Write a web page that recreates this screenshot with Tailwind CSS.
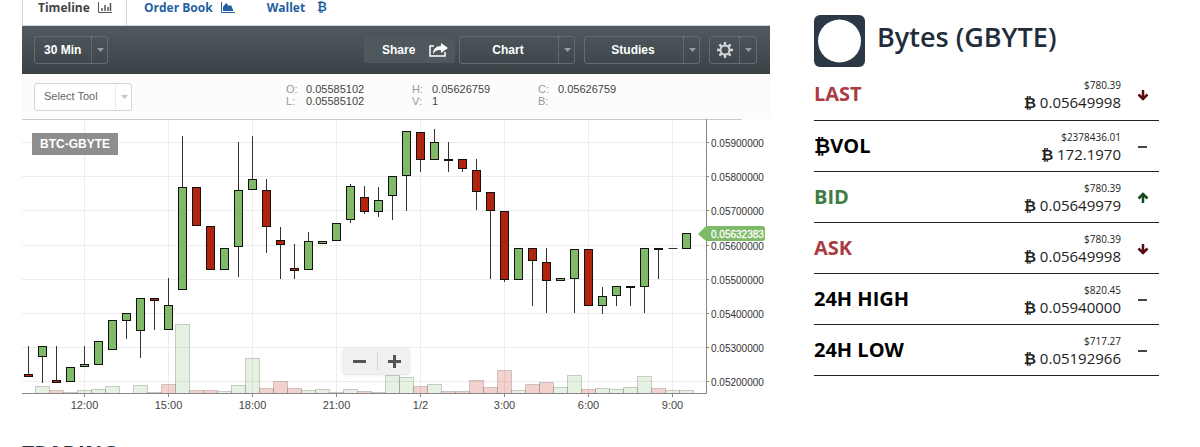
<!DOCTYPE html>
<html lang="en">
<head>
  <meta charset="UTF-8" />
  <meta name="viewport" content="width=device-width, initial-scale=1.0" />
  <title>BTC-GBYTE</title>
  <script src="https://cdn.jsdelivr.net/npm/@tailwindcss/browser@4"></script>
</head>
<body class="bg-white h-screen overflow-hidden font-['Open_Sans',sans-serif]">
  <div class="flex items-start gap-11 pl-[22px] pr-[41px]">
    <main class="flex-1 min-w-0">
      <nav class="flex h-[26px] border-b border-gray-300 text-xs font-bold text-[#23609f]">
        <a href="#" class="flex items-start gap-2 w-[105px] pl-[15px] border-x border-gray-300 text-[#444] leading-[15px]">
          Timeline
          <svg class="w-[14px] h-[11px] mt-[2px]" viewBox="0 0 14 11" fill="none" stroke="#555"><path d="M.5 0v10.5H14" /><path stroke-width="1.5" d="M4 9V6M7 9V3M10 9V5M12.5 9V1" /></svg>
        </a>
        <a href="#" class="flex items-start gap-2 pl-[17px] leading-[15px]">
          Order Book
          <svg class="w-[14px] h-[11px] mt-[2px]" viewBox="0 0 14 11"><path d="M.5 0v10.5H14" fill="none" stroke="#23609f" /><path d="M2 9V5l3-4 3 3 2-1 2.500 6z" fill="#23609f" /></svg>
        </a>
        <a href="#" class="flex items-start gap-3 pl-8 leading-[15px]">Wallet <span class="font-['DejaVu_Sans',sans-serif] text-xs leading-[15px]">₿</span></a>
      </nav>

      <div class="flex items-center h-12 pl-3 pr-[13px] bg-linear-to-b from-[#4f5a60] to-[#3b4246] font-['Liberation_Sans',sans-serif] text-xs font-bold text-white">
        <div class="relative w-[74px]">
          <select aria-label="Interval" class="appearance-none block w-full h-7 pl-[9px] pr-[18px] rounded-[3px] border border-[#646c71]">
            <option>30 Min</option>
          </select>
          <span class="absolute right-0 inset-y-0 w-[17px] flex items-center justify-center border-l border-dotted border-[#7b8287] pointer-events-none"><svg class="w-[7px] h-[4px]" viewBox="0 0 7 4"><path d="M0 0h7L3.500 4z" fill="#9ba0a3" /></svg></span>
        </div>
        <button class="ml-auto mr-1 flex items-center gap-[14px] w-[91px] h-[26px] pl-[18px] rounded-[3px] bg-[#4e585d]">
          Share
          <svg class="w-[19px] h-[14px]" viewBox="0 0 19 14"><path d="M5 3H1v10h15V9" fill="none" stroke="#fff" stroke-width="1.5" /><path d="M12 0l7 5-7 5V7C8 6.500 6 8 4 11 4 6 7 3 12 3z" fill="#fff" /></svg>
        </button>
        <div class="relative w-[116px] mr-[9px]">
          <select aria-label="Chart" class="appearance-none block w-full h-7 pr-[18px] rounded-[3px] border border-[#646c71] text-center">
            <option>Chart</option>
          </select>
          <span class="absolute right-0 inset-y-0 w-[17px] flex items-center justify-center border-l border-dotted border-[#7b8287] pointer-events-none"><svg class="w-[7px] h-[4px]" viewBox="0 0 7 4"><path d="M0 0h7L3.500 4z" fill="#9ba0a3" /></svg></span>
        </div>
        <div class="relative w-[116px] mr-[9px]">
          <select aria-label="Studies" class="appearance-none block w-full h-7 pr-[18px] rounded-[3px] border border-[#646c71] text-center">
            <option>Studies</option>
          </select>
          <span class="absolute right-0 inset-y-0 w-[17px] flex items-center justify-center border-l border-dotted border-[#7b8287] pointer-events-none"><svg class="w-[7px] h-[4px]" viewBox="0 0 7 4"><path d="M0 0h7L3.500 4z" fill="#9ba0a3" /></svg></span>
        </div>
        <button aria-label="Settings" class="flex w-12 h-7 rounded-[3px] border border-[#646c71]">
          <span class="flex-1 h-full flex items-center justify-center"><svg class="w-4 h-4" viewBox="0 0 16 16" fill="none" stroke="#d3d5d6"><circle cx="8" cy="8" r="4.5" stroke-width="2" /><path stroke-width="2.4" d="M8 0v3M8 13v3M0 8h3M13 8h3M2.400 2.400l2 2M11.600 11.600l2 2M2.400 13.600l2-2M11.600 4.400l2-2" /></svg></span>
          <span class="w-[17px] h-full flex items-center justify-center border-l border-dotted border-[#7b8287]"><svg class="w-[7px] h-[4px]" viewBox="0 0 7 4"><path d="M0 0h7L3.500 4z" fill="#9ba0a3" /></svg></span>
        </button>
      </div>

      <div class="flex items-center h-[45px] pl-3 bg-[#fcfcfc] font-['Liberation_Sans',sans-serif] text-[11px] text-[#444]">
        <div class="relative w-[98px]">
          <select aria-label="Tool" class="appearance-none block w-full h-7 pl-[9px] rounded-[3px] border border-gray-300 bg-white text-[#666]">
            <option>Select Tool</option>
          </select>
          <span class="absolute right-0 inset-y-0 w-[17px] flex items-center justify-center border-l border-dotted border-gray-300 pointer-events-none"><svg class="w-[7px] h-[4px]" viewBox="0 0 7 4"><path d="M0 0h7L3.500 4z" fill="#c4c4c4" /></svg></span>
        </div>
        <dl class="grid grid-cols-[20px_106px_20px_106px_20px_106px] ml-[154px] pb-1 leading-3">
          <dt class="text-[#999]">O:</dt><dd>0.05585102</dd>
          <dt class="text-[#999]">H:</dt><dd>0.05626759</dd>
          <dt class="text-[#999]">C:</dt><dd>0.05626759</dd>
          <dt class="text-[#999]">L:</dt><dd>0.05585102</dd>
          <dt class="text-[#999]">V:</dt><dd>1</dd>
          <dt class="text-[#999]">B:</dt><dd></dd>
        </dl>
      </div>

      <div class="relative font-['Liberation_Sans',sans-serif]">
        <svg id="chart" class="block w-full" viewBox="0 0 748 294"></svg>
        <div class="absolute left-[10px] top-[14px] px-2 bg-[#8e8e8e] text-white text-xs font-bold leading-[22px]">BTC-GBYTE</div>
        <div class="absolute left-[320px] top-[229px] flex items-center h-[26px] rounded-[4px] bg-[#f0f0f0] shadow-sm">
          <button aria-label="Zoom out" class="w-[36px] h-[17px] flex items-center justify-center border-r border-gray-300"><svg class="w-[13px] h-[13px]" viewBox="0 0 13 13"><path d="M0 6.500h13" stroke="#555" stroke-width="3" /></svg></button>
          <button aria-label="Zoom in" class="w-[32px] h-[17px] flex items-center justify-center"><svg class="w-[13px] h-[13px]" viewBox="0 0 13 13"><path d="M0 6.500h13M6.500 0v13" stroke="#555" stroke-width="3" /></svg></button>
        </div>
      </div>

      <h2 class="mt-[25px] text-[21px] leading-[30px] font-bold text-[#222d3a]">TRADING</h2>
    </main>

    <aside class="w-[345px] pt-[15px]">
      <div class="flex h-[54px] gap-3">
        <svg class="w-[51px] h-[52px]" viewBox="0 0 51 52"><rect width="51" height="52" rx="6" fill="#2b3947" /><circle cx="25.5" cy="26" r="21.5" fill="#fff" /></svg>
        <h1 class="text-[27px] leading-[44px] font-semibold text-[#222d3a]">Bytes (GBYTE)</h1>
      </div>
      <table class="w-full border-collapse text-[#222]">
        <tbody id="stats"></tbody>
      </table>
    </aside>
  </div>

  <script>
    // [up/down, high, top, bottom, low, volume]
    const candles = [
      ['r', 227, 255, 258, 258, 0], ['g', 227, 227, 238, 264, 7], ['r', 227, 261, 264, 264, 3], ['g', 248, 248, 263, 263, 1],
      ['g', 227, 245, 248, 248, 3], ['g', 222, 222, 246, 246, 4], ['g', 201, 201, 231, 231, 7], ['g', 194, 194, 202, 220, 0],
      ['g', 179, 179, 212, 239, 8], ['r', 179, 179, 182, 211, 1], ['g', 159, 186, 211, 211, 9, 'r'], ['g', 17, 68, 171, 171, 69],
      ['r', 68, 68, 107, 107, 3], ['r', 107, 107, 151, 151, 3], ['g', 129, 129, 151, 151, 2], ['g', 23, 71, 128, 158, 8],
      ['g', 17, 60, 71, 71, 35], ['r', 60, 71, 108, 134, 5], ['r', 108, 121, 126, 160, 12], ['r', 125, 149, 152, 160, 5],
      ['g', 113, 122, 151, 151, 3], ['g', 122, 122, 125, 125, 4], ['g', 104, 104, 122, 122, 1], ['g', 65, 67, 101, 104, 4],
      ['r', 67, 78, 93, 95, 2], ['g', 68, 81, 93, 98, 1], ['g', 57, 57, 77, 101, 18], ['g', 12, 12, 57, 92, 16],
      ['r', 13, 13, 41, 53, 7], ['g', 10, 23, 41, 41, 9], ['r', 23, 40, 42, 53, 2], ['r', 40, 40, 50, 53, 2],
      ['r', 40, 51, 73, 91, 13], ['r', 73, 73, 92, 160, 6], ['r', 92, 92, 161, 163, 23], ['g', 129, 129, 161, 161, 3],
      ['r', 129, 129, 142, 187, 9], ['r', 129, 143, 162, 194, 11], ['g', 159, 159, 162, 162, 6], ['g', 130, 130, 160, 194, 18],
      ['r', 130, 130, 187, 187, 4], ['g', 168, 177, 187, 195, 5], ['g', 167, 167, 177, 187, 4], ['g', 167, 167, 169, 187, 6],
      ['g', 129, 129, 168, 194, 17], ['r', 129, 129, 131, 160, 5], ['r', 129, 129, 129, 129, 3, 'g'], ['g', 114, 114, 130, 130, 3]
    ];
    const prices = ['0.05900000', '0.05800000', '0.05700000', '0.05600000', '0.05500000', '0.05400000', '0.05300000', '0.05200000'];
    const times = ['12:00', '15:00', '18:00', '21:00', '1/2', '3:00', '6:00', '9:00'];
    const priceY = [23, 57, 91, 126, 160, 194, 228, 262];

    let out = '';
    prices.forEach((p, i) => {
      const y = priceY[i] + 0.5;
      out += `<path d="M0 ${y}H684" stroke="#ececec" /><path d="M684 ${y}h3" stroke="#888" />` +
        `<text x="689" y="${y + 4}" font-size="10" fill="#333">${p}</text>`;
    });
    times.forEach((t, i) => {
      const x = 62.5 + i * 84;
      out += `<path d="M${x} 0V274" stroke="#ececec" /><path d="M${x} 274v4" stroke="#888" />` +
        `<text x="${x}" y="290" font-size="11" text-anchor="middle" fill="#444">${t}</text>`;
    });
    candles.forEach(([dir, high, top, bottom, low, vol, volDir], i) => {
      const x = 6 + i * 14;
      const up = (volDir || dir) === 'g';
      if (vol) {
        out += `<rect x="${x - 6.5}" y="${274.5 - vol}" width="14" height="${vol}" fill="${up ? '#7fb96a' : '#c8321a'}" fill-opacity="${up ? 0.2 : 0.22}" stroke="#777" stroke-opacity="0.35" />`;
      }
    });
    candles.forEach(([dir, high, top, bottom, low], i) => {
      const x = 6 + i * 14 + 0.5;
      if (low > high) out += `<path d="M${x} ${high}V${low}" stroke="#333" />`;
      if (bottom === top) out += `<path d="M${x - 4} ${top + 0.5}h9" stroke="#333" />`;
      else out += `<rect x="${x - 4}" y="${top + 0.5}" width="8" height="${bottom - top - 1}" fill="${dir === 'g' ? '#80ba68' : '#b0240d'}" stroke="#111" />`;
    });
    out += '<path d="M0 .5H720" stroke="#ccc" /><path d="M684.5 0V274.5H0" fill="none" stroke="#888" />' +
      '<path d="M676 115l8-8h56a3 3 0 0 1 3 3v9a3 3 0 0 1-3 3h-56z" fill="#7cba67" />' +
      '<text x="689" y="119" font-size="10" fill="#fff" stroke="#fff" stroke-width="0.3">0.05632383</text>';
    document.getElementById('chart').innerHTML = out;

    const stats = [
      { label: 'LAST', color: 'text-[#a93c43]', usd: '$780.39', btc: '0.05649998', trend: 'down' },
      { label: '₿VOL', color: 'text-black', usd: '$2378436.01', btc: '172.1970', trend: 'flat' },
      { label: 'BID', color: 'text-[#3f7d42]', usd: '$780.39', btc: '0.05649979', trend: 'up' },
      { label: 'ASK', color: 'text-[#a93c43]', usd: '$780.39', btc: '0.05649998', trend: 'down' },
      { label: '24H HIGH', color: 'text-black', usd: '$820.45', btc: '0.05940000', trend: 'flat' },
      { label: '24H LOW', color: 'text-black', usd: '$717.27', btc: '0.05192966', trend: 'flat' }
    ];
    const icons = {
      down: '<path d="M6 1v8M1.500 5.500L6 10l4.500-4.500" stroke="#5a0a10" />',
      up: '<path d="M6 11V3M1.500 6.500L6 2l4.500 4.500" stroke="#14491c" />',
      flat: '<path d="M1 6h9" stroke="#444" stroke-width="2" />'
    };
    document.getElementById('stats').innerHTML = stats.map(s => `
      <tr class="h-[51px] border-b border-[#222]">
        <th scope="row" class="p-0 text-left text-[20px] leading-7 font-bold ${s.color}">${s.label}</th>
        <td class="p-0 pt-[2px] text-right">
          <div class="text-[10px] leading-[14px]">${s.usd}</div>
          <div class="text-[15px] leading-5"><span class="font-bold">₿</span> ${s.btc}</div>
        </td>
        <td class="p-0 pt-[2px] pl-4 w-[38px]"><svg class="w-3 h-3" viewBox="0 0 12 12" fill="none" stroke-width="2.5">${icons[s.trend]}</svg></td>
      </tr>`).join('');
  </script>
</body>
</html>
